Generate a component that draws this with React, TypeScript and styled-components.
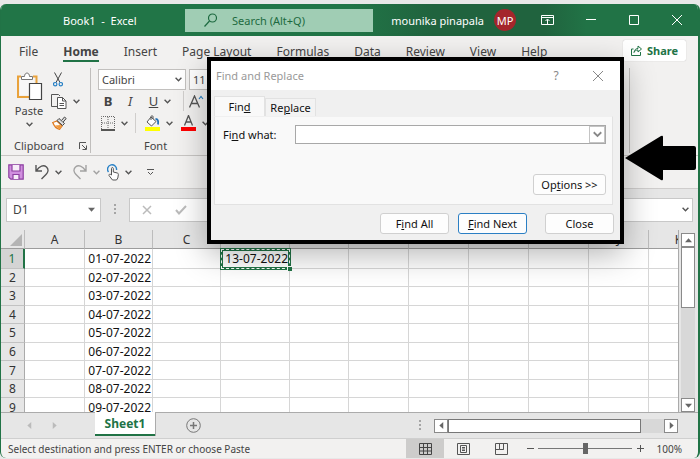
import React from "react";
import styled, { createGlobalStyle, css } from "styled-components";

const GREEN = "#217346";

const GlobalStyle = createGlobalStyle`
  * { box-sizing: border-box; }
  body { margin: 0; background: #f1f1f1; }
  body, button, input, select { font-family: "Noto Sans", "Open Sans", sans-serif; font-size: 12px; color: #444; }
  button { border: 0; padding: 0; background: none; cursor: pointer; }
  svg { display: block; flex: none; }
`;

const Window = styled.main`
  display: flex;
  flex-direction: column;
  height: 100vh;
  padding: 4px 0 1px;
  overflow: hidden;
  position: relative;
  background: #e8e8e8;
`;
const Frame = styled.div`
  display: flex;
  flex-direction: column;
  flex: 1;
  min-height: 0;
  border: 1px solid ${GREEN};
  border-top: 0;
  border-right-width: 2px;
  border-bottom: 0;
  border-radius: 6px;
  overflow: hidden;
  background: #f2f1f0;
`;

/* title bar */
const TitleBar = styled.header`
  display: flex;
  align-items: center;
  height: 32px;
  flex: none;
  color: #fff;
  background: linear-gradient(90deg, #217547 0 50%, #20633e 62%, #20633e 78%, #217346 84%);
`;
const DocTitle = styled.h1`
  margin: 0;
  width: 184px;
  padding-left: 62px;
  font-size: 11px;
  font-weight: 400;
  white-space: pre;
`;
const SearchBox = styled.label`
  display: flex;
  align-items: center;
  gap: 14px;
  flex: 0 1 188px;
  height: 23px;
  padding-left: 19px;
  background: #a0cdb4;
`;
const SearchInput = styled.input`
  width: 100%;
  min-width: 0;
  border: 0;
  padding: 0;
  outline: 0;
  background: none;
  font-size: 11px;
  color: #1d6a40;
  &::placeholder { color: #1d6a40; opacity: 1; }
`;
const Account = styled.button`
  display: flex;
  align-items: center;
  gap: 10px;
  margin-left: auto;
  color: #fff;
  font-size: 11px;
`;
const Avatar = styled.span`
  display: grid;
  place-items: center;
  width: 22px;
  height: 22px;
  border-radius: 50%;
  background: #a4262c;
`;
const Controls = styled.div`
  display: flex;
  margin-left: 10px;
`;
const WindowButton = styled.button`
  display: grid;
  place-items: center;
  width: 43px;
  height: 32px;
  color: #fff;
`;

/* ribbon */
const TabBar = styled.nav`
  display: flex;
  align-items: flex-start;
  gap: 25px;
  height: 26px;
  flex: none;
  padding: 4px 12px 0 18px;
`;
const RibbonTab = styled.button<{ $active?: boolean }>`
  height: 22px;
  padding-top: 3px;
  line-height: 17px;
  white-space: nowrap;
  border-bottom: 2px solid ${(p) => (p.$active ? GREEN : "transparent")};
  font-weight: ${(p) => (p.$active ? 700 : 400)};
`;
const ShareButton = styled.button`
  display: flex;
  align-items: center;
  justify-content: center;
  gap: 5px;
  width: 63px;
  height: 21px;
  margin-left: auto;
  background: #fff;
  border-radius: 2px;
  box-shadow: 0 0 1px #aaa;
  color: ${GREEN};
  font-weight: 700;
  font-size: 11px;
`;
const Ribbon = styled.section`
  display: flex;
  height: 94px;
  flex: none;
  padding: 6px 68px 2px 0;
  border-bottom: 1px solid #c8c6c4;
`;
const Group = styled.div<{ $width: number }>`
  display: flex;
  flex-direction: column;
  justify-content: space-between;
  width: ${(p) => p.$width}px;
  border-right: 1px solid #c0bebc;
`;
const FontGroup = styled(Group)`
  flex: 1;
`;
const GroupLabel = styled.div<{ $indent: number }>`
  display: flex;
  align-items: center;
  justify-content: space-between;
  padding: 0 3px 0 ${(p) => p.$indent}px;
  font-size: 11px;
  line-height: 14px;
`;
const ClipboardTools = styled.div`
  display: grid;
  grid-template-columns: 52px 1fr;
`;
const PasteButton = styled.button`
  display: flex;
  flex-direction: column;
  align-items: center;
  padding: 4px 0 0 4px;
  font-size: 11px;
  line-height: 15px;
  gap: 3px;
`;
const SmallTools = styled.div`
  display: grid;
  grid-template-rows: repeat(3, 22px);
  align-items: center;
`;
const ToolRow = styled.div`
  display: flex;
  align-items: center;
  height: 22px;
  padding-left: 7px;
`;
const ToolButton = styled.button<{ $width?: number; $dim?: boolean }>`
  display: flex;
  align-items: center;
  justify-content: center;
  gap: 6px;
  width: ${(p) => (p.$width ? `${p.$width}px` : "auto")};
  flex: none;
  height: 22px;
  font-size: 13px;
  opacity: ${(p) => (p.$dim ? 0.5 : 1)};
`;
const Rule = styled.span`
  width: 1px;
  height: 20px;
  margin: 0 5px;
  background: #d0cecc;
  flex: none;
`;
const SelectWrap = styled.span<{ $width: number }>`
  display: grid;
  grid-template-columns: 1fr 10px;
  align-items: center;
  width: ${(p) => p.$width}px;
  height: 21px;
  margin-right: 3px;
  border: 1px solid #c2c0be;
  background: #fff;
  flex: none;
`;
const Select = styled.select`
  appearance: none;
  border: 0;
  padding: 0 0 0 3px;
  background: none;
  min-width: 0;
  width: 100%;
  font-size: 11px;
`;

const QuickBar = styled.div`
  display: flex;
  align-items: center;
  height: 33px;
  flex: none;
  padding-left: 5px;
  border-bottom: 1px solid #cfcdcc;
`;

/* formula bar */
const FormulaBar = styled.div`
  display: flex;
  align-items: center;
  height: 41px;
  flex: none;
  padding: 0 5px;
  background: #e6e6e6;
`;
const NameBox = styled.label`
  display: flex;
  align-items: center;
  width: 95px;
  height: 24px;
  padding: 0 5px 0 6px;
  border: 1px solid #c8c8c8;
  background: #fff;
`;
const PlainInput = styled.input`
  flex: 1;
  min-width: 0;
  width: 100%;
  border: 0;
  padding: 0;
  outline: 0;
  background: none;
`;
const Grip = styled.span`
  display: grid;
  place-items: center;
  width: 28px;
`;
const FormulaField = styled.div`
  display: flex;
  align-items: center;
  flex: 1;
  height: 24px;
  border: 1px solid #c8c8c8;
  background: #fff;
  padding-right: 3px;
`;

/* sheet */
const SheetArea = styled.div`
  display: flex;
  flex: 1;
  min-height: 0;
  background: #e6e6e6;
`;
const SheetClip = styled.div`
  flex: 1;
  min-width: 0;
  overflow: hidden;
  border-right: 1px solid #aaa;
`;
const Grid = styled.table`
  table-layout: fixed;
  width: 708px;
  height: 187px;
  border-collapse: separate;
  border-spacing: 0;
  color: #111;
`;
const Col = styled.col<{ $w: number }>`
  width: ${(p) => p.$w}px;
`;
const ColHead = styled.th`
  height: 19px;
  padding: 1px 0 0;
  font-weight: 400;
  line-height: 16px;
  color: #333;
  background: #e6e6e6;
  border-right: 1px solid #bcbcbc;
  border-bottom: 1px solid #9c9c9c;
`;
const Corner = styled(ColHead)`
  padding-left: 9px;
`;
const RowHead = styled.th<{ $active: boolean }>`
  padding: 1px 0 0;
  font-weight: 400;
  line-height: 16px;
  color: ${(p) => (p.$active ? GREEN : "#333")};
  background: ${(p) => (p.$active ? "#d4d4d4" : "#e6e6e6")};
  border-right: ${(p) => (p.$active ? `2px solid ${GREEN}` : "1px solid #ababab")};
  border-bottom: 1px solid #c2c2c2;
`;
const Cell = styled.td<{ $copied?: boolean }>`
  padding: 1px 1px 0 0;
  text-align: right;
  line-height: 16px;
  white-space: nowrap;
  background: #fff;
  border-right: 1px solid #d6d6d6;
  border-bottom: 1px solid #d6d6d6;
  ${(p) =>
    p.$copied &&
    css`
      position: relative;
      padding: 0;
      line-height: 15px;
      border: 2px solid ${GREEN};
      box-shadow: 0 0 0 1px ${GREEN};
      outline: 1px dashed #fff;
      outline-offset: -1px;
      &::after {
        content: "";
        position: absolute;
        right: -4px;
        bottom: -4px;
        width: 4px;
        height: 4px;
        border: 1px solid #fff;
        border-right: 0;
        border-bottom: 0;
        background: ${GREEN};
      }
    `}
`;
const VScroll = styled.div`
  display: flex;
  flex-direction: column;
  width: 14px;
  margin: 3px 3px 0 2px;
  background: #d8d8d8;
`;
const ScrollButton = styled.button`
  display: grid;
  place-items: center;
  width: 14px;
  height: 14px;
  flex: none;
  border: 1px solid #8a8a8a;
  background: #fff;
`;
const VThumb = styled.div`
  height: 61px;
  border: 1px solid #8a8a8a;
  background: #fff;
`;
const Grow = styled.span`
  flex: 1;
`;

/* footer */
const SheetBar = styled.div`
  display: flex;
  align-items: center;
  height: 27px;
  flex: none;
  padding-right: 20px;
  border-top: 1px solid #ababab;
  border-bottom: 1px solid #cfcfcf;
  background: #e6e6e6;
`;
const SheetNav = styled.div`
  display: flex;
  justify-content: space-between;
  width: 94px;
  padding: 0 37px 0 25px;
`;
const SheetTab = styled.button`
  align-self: flex-start;
  width: 60px;
  height: 24px;
  margin-top: -1px;
  background: #fff;
  border-bottom: 2px solid ${GREEN};
  box-shadow: 1px 0 0 #ababab;
  color: ${GREEN};
  font-weight: 700;
`;
const AddSheet = styled.button`
  margin-left: 31px;
`;
const HScroll = styled.div`
  display: flex;
  width: 244px;
  background: #d8d8d8;
`;
const HThumb = styled.div`
  width: 193px;
  border: 1px solid #777;
  background: #fff;
`;
const StatusBar = styled.footer`
  display: flex;
  align-items: center;
  height: 19px;
  flex: none;
  padding: 0 16px 0 7px;
`;
const StatusText = styled.span`
  flex: 1;
  white-space: nowrap;
  font-size: 10px;
`;
const Views = styled.div`
  display: flex;
  margin-right: 2px;
`;
const ViewButton = styled.button<{ $active?: boolean }>`
  display: grid;
  place-items: center;
  width: 38px;
  height: 19px;
  background: ${(p) => (p.$active ? "#cdcccb" : "none")};
`;
const ZoomButton = styled.button`
  width: 16px;
  display: grid;
  place-items: center;
`;
const ZoomSlider = styled.input`
  appearance: none;
  width: 94px;
  height: 12px;
  margin: 0;
  background: linear-gradient(#777, #777) center / 100% 1px no-repeat;
  &::-webkit-slider-thumb {
    appearance: none;
    width: 5px;
    height: 11px;
    background: #666;
  }
`;
const Percent = styled.span`
  width: 34px;
  text-align: right;
  font-size: 10px;
`;

/* dialog */
const Dialog = styled.section`
  position: absolute;
  left: 207px;
  top: 57px;
  width: 417px;
  border: 4px solid #000;
  background: #f0f0f0;
  box-shadow: 0 10px 30px rgba(0, 0, 0, 0.3);
  color: #222;
  font-size: 11px;
`;
const DialogTitle = styled.header`
  display: flex;
  align-items: center;
  height: 29px;
  padding: 0 15px 0 5px;
  background: #fff;
  color: #999;
`;
const DialogHeading = styled.h2`
  flex: 1;
  margin: 0;
  font-size: 11px;
  font-weight: 400;
`;
const TitleButton = styled.button`
  display: grid;
  place-items: center;
  width: 14px;
  margin-left: 28px;
  color: #888;
`;
const DialogTabs = styled.div`
  display: flex;
  align-items: flex-end;
  padding: 6px 3px 0;
`;
const DialogTab = styled.button<{ $active?: boolean }>`
  width: 51px;
  height: ${(p) => (p.$active ? 20 : 18)}px;
  border: 1px solid #e2e2e2;
  border-bottom: 0;
  background: ${(p) => (p.$active ? "#f9f9f9" : "#f3f3f3")};
  color: #111;
  font-size: 11px;
`;
const DialogPanel = styled.div`
  display: flex;
  flex-direction: column;
  justify-content: space-between;
  align-items: flex-end;
  height: 89px;
  margin: 0 7px 0 3px;
  padding: 8px 6px 9px 8px;
  border: 1px solid #e2e2e2;
  border-top-color: #f0f0f0;
  background: #f9f9f9;
`;
const FindRow = styled.div`
  display: flex;
  align-items: center;
  width: 100%;
`;
const FindLabel = styled.label`
  width: 72px;
  color: #111;
`;
const Combo = styled.div`
  display: flex;
  flex: 1;
  height: 19px;
  border: 1px solid #a8a8a8;
  background: #fff;
`;
const ComboButton = styled.button`
  display: grid;
  place-items: center;
  width: 16px;
  border: 1px solid #c4c4c4;
  color: #777;
`;
const PushButton = styled.button<{ $width: number; $primary?: boolean }>`
  width: ${(p) => p.$width}px;
  height: 21px;
  border: 1px solid ${(p) => (p.$primary ? "#2b7fc4" : "#d0d0d0")};
  border-radius: 3px;
  background: #fdfdfd;
  color: #111;
  font-size: 11px;
  white-space: nowrap;
`;
const DialogActions = styled.div`
  display: flex;
  justify-content: flex-end;
  gap: 9px;
  padding: 8px 6px 6px;
`;
const CloseSlot = styled.span`
  margin-left: 9px;
`;
const Pointer = styled.svg`
  position: absolute;
  left: 624px;
  top: 135px;
`;

const Chevron = ({ size = 7, color = "#555" }: { size?: number; color?: string }) => (
  <svg width={size} height={size} viewBox="0 0 6 6" fill="none" stroke={color} strokeWidth="1.2">
    <path d="M.5 1.5 3 4 5.5 1.5" />
  </svg>
);
const Triangle = ({ turn = 0, color = "#666", size = 7 }: { turn?: number; color?: string; size?: number }) => (
  <svg width={size} height={size} viewBox="0 0 8 8">
    <path d="M0 2h8L4 6.5z" fill={color} transform={`rotate(${turn} 4 4)`} />
  </svg>
);
const Dots = () => (
  <svg width="2" height="11" fill="#a5a5a5">
    <path d="M0 0h2v2H0zM0 4h2v2H0zM0 8h2v2H0z" />
  </svg>
);

const PasteIcon = () => (
  <svg width="27" height="28" viewBox="0 0 27 28" fill="none">
    <path d="M5 4.5H2v20.500H13M17 4.5h3.5V11" stroke="#e9a23b" strokeWidth="2" />
    <path d="M4 6h14v17H4z" fill="#fafafa" opacity=".7" />
    <path d="M5.5 7.5v-3h3C8.5 2.500 9.500 1 11 1s2.500 1.500 2.500 3.500h3v3z" fill="#fff" stroke="#777" />
    <path d="M13.500 11.500h12v16h-12z" fill="#fff" stroke="#444" strokeWidth="1.200" />
  </svg>
);
const CutIcon = () => (
  <svg width="10" height="15" viewBox="0 0 10 15" fill="none">
    <path d="M1.500.500 7 10.500M8.500.500 3 10.500" stroke="#444" />
    <circle cx="2.200" cy="12.200" r="1.700" stroke="#2a82c6" strokeWidth="1.200" />
    <circle cx="7.800" cy="12.200" r="1.700" stroke="#2a82c6" strokeWidth="1.200" />
  </svg>
);
const CopyIcon = () => (
  <svg width="16" height="15" viewBox="0 0 16 15" fill="none" stroke="#555">
    <path d="M6 12.500H.500V.500h7L9 2" />
    <path d="M6.500 3.500h5l3.500 3.500v7.500H6.500z" fill="#fff" />
    <path d="M11.500 3.500V7H15M8.500 9.500h4.500M8.500 11.500h4.500" />
  </svg>
);
const BrushIcon = () => (
  <svg width="15" height="14" viewBox="0 0 15 14">
    <path d="M.800 6.500 5 5l5 5-2.500 3.300C4 12.500 2 10 .800 6.500z" fill="#fff" stroke="#e07b20" strokeWidth="1.300" />
    <path d="M3 9.500 7.300 13.300 9.500 10.500 8 9z" fill="#f09a3e" />
    <path d="m5 4.500 2-2 5.500 5-2 2z" fill="#ddd" stroke="#444" />
    <path d="M9.500 4.500 12.500 1l1.700 1.500-3 3.500" fill="#ddd" stroke="#444" />
  </svg>
);
const LaunchIcon = () => (
  <svg width="8" height="8" viewBox="0 0 8 8" fill="none" stroke="#555">
    <path d="M.500 7V.500H7M3 3l4 4M7.500 3.500v4h-4" />
  </svg>
);
const BorderIcon = () => (
  <svg width="14" height="15" viewBox="0 0 14 15" fill="none" stroke="#666">
    <path d="M.500 13V.500h13V13M7 1v12M1 7h12" strokeDasharray="1 1" />
    <path d="M0 14h14" stroke="#222" strokeWidth="1.400" />
  </svg>
);
const FillIcon = () => (
  <svg width="15" height="16" viewBox="0 0 15 16" fill="none">
    <path d="m6 2 5 4.500L6.500 11 2 7z" fill="#fff" stroke="#555" />
    <path d="M6 5V1.500C6 .500 8 .500 8 1.500V4" stroke="#555" />
    <path d="M10.500 4c2.500 0 3 2 2.500 5.500" stroke="#2673b8" strokeWidth="1.800" />
    <path d="M0 12h15v4H0z" fill="#ffff00" />
  </svg>
);
const FontColorIcon = () => (
  <svg width="15" height="16" viewBox="0 0 15 16" fill="none">
    <path d="M3.500 10.500 7.500.500l4 10M5 7h5" stroke="#555" strokeWidth="1.300" />
    <path d="M0 12h15v4H0z" fill="#f00" />
  </svg>
);
const GrowFontIcon = () => (
  <svg width="15" height="13" viewBox="0 0 15 13" fill="none">
    <path d="M.500 12.500 5.500 1l5 11.500M2.500 8.500h6.300" stroke="#555" strokeWidth="1.300" />
    <path d="M10 4 12 1.500 14 4" stroke="#2a82c6" strokeWidth="1.200" />
  </svg>
);
const SaveIcon = () => (
  <svg width="16" height="16" viewBox="0 0 16 16" fill="none" stroke="#8c3fa0" strokeWidth="1.200">
    <path d="M.800.800h14.400v14.400H2.800l-2-2z" fill="#d08fdf" />
    <path d="M4 1v6h8V1M5 15v-4.500h6V15" fill="#f7edf9" />
  </svg>
);
const UndoIcon = ({ flip = false }: { flip?: boolean }) => (
  <svg width="14" height="16" viewBox="0 0 14 16" fill="none" stroke="#555" strokeWidth="1.400">
    <g transform={flip ? "matrix(-1 0 0 1 14 0)" : undefined}>
      <path d="M1 1v6h6M1.500 6.500C4.500 2 8.500.500 11.500 3c2.500 2.500 1.500 5.500-.500 7.500L6.500 15" />
    </g>
  </svg>
);
const TouchIcon = () => (
  <svg width="12" height="17" viewBox="0 0 12 17" fill="none">
    <path d="M1.500 8a4.500 4.500 0 1 1 8-2" stroke="#2a82c6" strokeWidth="1.400" />
    <path d="M4.500 11V4.500c0-1.300 1.800-1.300 1.800 0V8l4 1c1 .300 1.200 1 1 2l-.500 3-1.300 2H5.500L2 11.500c-.500-1 1-1.800 1.700-1z" fill="#fff" stroke="#555" />
  </svg>
);

const COLUMNS = ["A", "B", "C", "D", "E", "F", "G", "H", "I", "J", "K"];
const WIDTHS = [60, 68, 68, 69, 59, 60, 60, 60, 60, 60, 60];
const ROWS = [1, 2, 3, 4, 5, 6, 7, 8, 9];
const RIBBON_TABS = ["File", "Home", "Insert", "Page Layout", "Formulas", "Data", "Review", "View", "Help"];

const cellValue = (row: number, col: string) => {
  if (col === "B") return `0${row}-07-2022`;
  if (col === "D" && row === 1) return "13-07-2022";
  return "";
};

function FindDialog() {
  return (
    <Dialog role="dialog" aria-labelledby="find-title">
      <DialogTitle>
        <DialogHeading id="find-title">Find and Replace</DialogHeading>
        <TitleButton aria-label="Help">?</TitleButton>
        <TitleButton aria-label="Close dialog">
          <svg width="10" height="10" stroke="currentColor"><path d="m0 0 10 10M10 0 0 10" /></svg>
        </TitleButton>
      </DialogTitle>
      <DialogTabs role="tablist">
        <DialogTab role="tab" aria-selected $active>Fin<u>d</u></DialogTab>
        <DialogTab role="tab" aria-selected={false}>Re<u>p</u>lace</DialogTab>
      </DialogTabs>
      <DialogPanel role="tabpanel">
        <FindRow>
          <FindLabel htmlFor="find-what">Fi<u>n</u>d what:</FindLabel>
          <Combo>
            <PlainInput id="find-what" />
            <ComboButton aria-label="Recent searches"><Chevron size={9} color="#888" /></ComboButton>
          </Combo>
        </FindRow>
        <PushButton $width={73}>Op<u>t</u>ions &gt;&gt;</PushButton>
      </DialogPanel>
      <DialogActions>
        <PushButton $width={69}>F<u>i</u>nd All</PushButton>
        <PushButton $width={69} $primary><u>F</u>ind Next</PushButton>
        <CloseSlot><PushButton $width={69}>Close</PushButton></CloseSlot>
      </DialogActions>
    </Dialog>
  );
}

export default function App() {
  return (
    <Window>
      <GlobalStyle />
      <Frame>
        <TitleBar>
          <DocTitle>{"Book1  -  Excel"}</DocTitle>
          <SearchBox>
            <svg width="14" height="14" viewBox="0 0 14 14" fill="none" stroke="#1d6a40" strokeWidth="1.200">
              <circle cx="8.500" cy="5" r="4" /><path d="M5.500 8 .500 13.500" />
            </svg>
            <SearchInput placeholder="Search (Alt+Q)" aria-label="Search" />
          </SearchBox>
          <Account>mounika pinapala<Avatar>MP</Avatar></Account>
          <Controls>
            <WindowButton aria-label="Ribbon display options">
              <svg width="13" height="10" viewBox="0 0 13 10" fill="none" stroke="#fff"><path d="M.500.500h12v9H.500zM.500 2.500h12M6.500 9V4.500M4.500 6l2-2 2 2" /></svg>
            </WindowButton>
            <WindowButton aria-label="Minimize">
              <svg width="10" height="2" stroke="#fff"><path d="M0 .5h10" /></svg>
            </WindowButton>
            <WindowButton aria-label="Maximize">
              <svg width="10" height="10" fill="none" stroke="#fff"><path d="M.5.5h9v9h-9z" /></svg>
            </WindowButton>
            <WindowButton aria-label="Close">
              <svg width="10" height="10" stroke="#fff"><path d="m0 0 10 10M10 0 0 10" /></svg>
            </WindowButton>
          </Controls>
        </TitleBar>

        <TabBar>
          {RIBBON_TABS.map((t) => (
            <RibbonTab key={t} $active={t === "Home"}>{t}</RibbonTab>
          ))}
          <ShareButton>
            <svg width="11" height="11" viewBox="0 0 11 11" fill="none" stroke={GREEN}><path d="M2.500 4H.500v6.500h9V7M3 7.500c.500-3 2-4 4-4V1l3.500 3L7 7V5c-2 0-3 .500-4 2.500z" /></svg>
            Share
          </ShareButton>
        </TabBar>

        <Ribbon>
          <Group $width={90}>
            <ClipboardTools>
              <PasteButton><PasteIcon />Paste<Chevron /></PasteButton>
              <SmallTools>
                <ToolButton $width={10} aria-label="Cut"><CutIcon /></ToolButton>
                <ToolButton $width={24} aria-label="Copy"><CopyIcon /><Chevron /></ToolButton>
                <ToolButton $width={12} aria-label="Format painter"><BrushIcon /></ToolButton>
              </SmallTools>
            </ClipboardTools>
            <GroupLabel $indent={13}>Clipboard<LaunchIcon /></GroupLabel>
          </Group>
          <FontGroup $width={540}>
            <div>
              <ToolRow>
                <SelectWrap $width={88}>
                  <Select aria-label="Font"><option>Calibri</option></Select><Chevron />
                </SelectWrap>
                <SelectWrap $width={36}>
                  <Select aria-label="Font size"><option>11</option></Select><Chevron />
                </SelectWrap>
              </ToolRow>
              <ToolRow>
                <ToolButton $width={20}><b>B</b></ToolButton>
                <ToolButton $width={24}><i>I</i></ToolButton>
                <ToolButton $width={36}><u>U</u><Chevron /></ToolButton>
                <Rule />
                <ToolButton aria-label="Increase font size"><GrowFontIcon /></ToolButton>
              </ToolRow>
              <ToolRow>
                <ToolButton $width={32} aria-label="Borders"><BorderIcon /><Chevron /></ToolButton>
                <Rule />
                <ToolButton $width={35} aria-label="Fill color"><FillIcon /><Chevron /></ToolButton>
                <ToolButton $width={38} aria-label="Font color"><FontColorIcon /><Chevron /></ToolButton>
              </ToolRow>
            </div>
            <GroupLabel $indent={53}>Font</GroupLabel>
          </FontGroup>
        </Ribbon>

        <QuickBar>
          <ToolButton $width={20} aria-label="Save"><SaveIcon /></ToolButton>
          <ToolButton $width={44} aria-label="Undo"><UndoIcon /><Chevron /></ToolButton>
          <ToolButton $width={32} $dim aria-label="Redo"><UndoIcon flip /><Chevron /></ToolButton>
          <ToolButton $width={34} aria-label="Touch mode"><TouchIcon /><Chevron /></ToolButton>
          <ToolButton $width={28} aria-label="Customize toolbar">
            <svg width="7" height="7" fill="none" stroke="#555"><path d="M0 .5h7M1 3l2.500 2.500L6 3" /></svg>
          </ToolButton>
        </QuickBar>

        <FormulaBar>
          <NameBox><PlainInput aria-label="Name box" defaultValue="D1" /><Triangle /></NameBox>
          <Grip><Dots /></Grip>
          <FormulaField>
            <ToolButton $width={34} aria-label="Cancel">
              <svg width="10" height="10" stroke="#bbb" strokeWidth="1.500"><path d="m1 1 8 8M9 1 1 9" /></svg>
            </ToolButton>
            <ToolButton $width={34} aria-label="Enter">
              <svg width="12" height="10" fill="none" stroke="#bbb" strokeWidth="2"><path d="m1 5 3 3.500L11 1" /></svg>
            </ToolButton>
            <PlainInput aria-label="Formula" />
            <Chevron />
          </FormulaField>
        </FormulaBar>

        <SheetArea>
          <SheetClip>
            <Grid>
              <colgroup>
                <Col $w={24} />
                {COLUMNS.map((c, i) => <Col key={c} $w={WIDTHS[i]} />)}
              </colgroup>
              <thead>
                <tr>
                  <Corner><svg width="12" height="12"><path d="M12 0v12H0z" fill="#b4b4b4" /></svg></Corner>
                  {COLUMNS.map((c) => <ColHead key={c} scope="col">{c}</ColHead>)}
                </tr>
              </thead>
              <tbody>
                {ROWS.map((r) => (
                  <tr key={r}>
                    <RowHead scope="row" $active={r === 1}>{r}</RowHead>
                    {COLUMNS.map((c) => (
                      <Cell key={c} $copied={r === 1 && c === "D"}>{cellValue(r, c)}</Cell>
                    ))}
                  </tr>
                ))}
              </tbody>
            </Grid>
          </SheetClip>
          <VScroll>
            <ScrollButton aria-label="Scroll up"><Triangle turn={180} /></ScrollButton>
            <VThumb />
            <Grow />
            <ScrollButton aria-label="Scroll down"><Triangle /></ScrollButton>
          </VScroll>
        </SheetArea>

        <SheetBar>
          <SheetNav><Triangle turn={90} color="#bbb" /><Triangle turn={270} color="#bbb" /></SheetNav>
          <SheetTab>Sheet1</SheetTab>
          <AddSheet aria-label="New sheet">
            <svg width="15" height="15" fill="none" stroke="#777"><circle cx="7.500" cy="7.500" r="6.800" /><path d="M7.500 4v7M4 7.500h7" strokeWidth="1.500" /></svg>
          </AddSheet>
          <Grow />
          <Grip><Dots /></Grip>
          <HScroll>
            <ScrollButton aria-label="Scroll left"><Triangle turn={90} /></ScrollButton>
            <HThumb />
            <Grow />
            <ScrollButton aria-label="Scroll right"><Triangle turn={270} /></ScrollButton>
          </HScroll>
        </SheetBar>

        <StatusBar>
          <StatusText>Select destination and press ENTER or choose Paste</StatusText>
          <Views>
            <ViewButton $active aria-label="Normal view">
              <svg width="13" height="12" fill="none" stroke="#444"><path d="M.5.5h12v11H.5zM.5 4.500h12M.5 8h12M4.500.5v11M8.500.5v11" /></svg>
            </ViewButton>
            <ViewButton aria-label="Page layout view">
              <svg width="13" height="12" fill="none" stroke="#555"><path d="M.5.5h12v11H.5zM3.500 2.500h6v7h-6zM5 4.500h3M5 6h3M5 7.500h3" /></svg>
            </ViewButton>
            <ViewButton aria-label="Page break view">
              <svg width="13" height="12" fill="none" stroke="#555"><path d="M.5.5h12v11H.5zM4.500.5v6h4v-6M.5 6.500h4M8.500.5v6" /></svg>
            </ViewButton>
          </Views>
          <ZoomButton aria-label="Zoom out"><svg width="7" height="7" stroke="#555"><path d="M0 3.500h7" /></svg></ZoomButton>
          <ZoomSlider type="range" aria-label="Zoom" defaultValue={50} />
          <ZoomButton aria-label="Zoom in"><svg width="7" height="7" stroke="#555"><path d="M0 3.500h7M3.500 0v7" /></svg></ZoomButton>
          <Percent>100%</Percent>
        </StatusBar>
      </Frame>

      <FindDialog />
      <Pointer width="73" height="46" viewBox="0 0 73 46" aria-hidden="true">
        <path d="M1 23 37 1q2-1 2 1v9h31q2 0 2 2v20q0 2-2 2H39v9q0 2-2 1z" />
      </Pointer>
    </Window>
  );
}
